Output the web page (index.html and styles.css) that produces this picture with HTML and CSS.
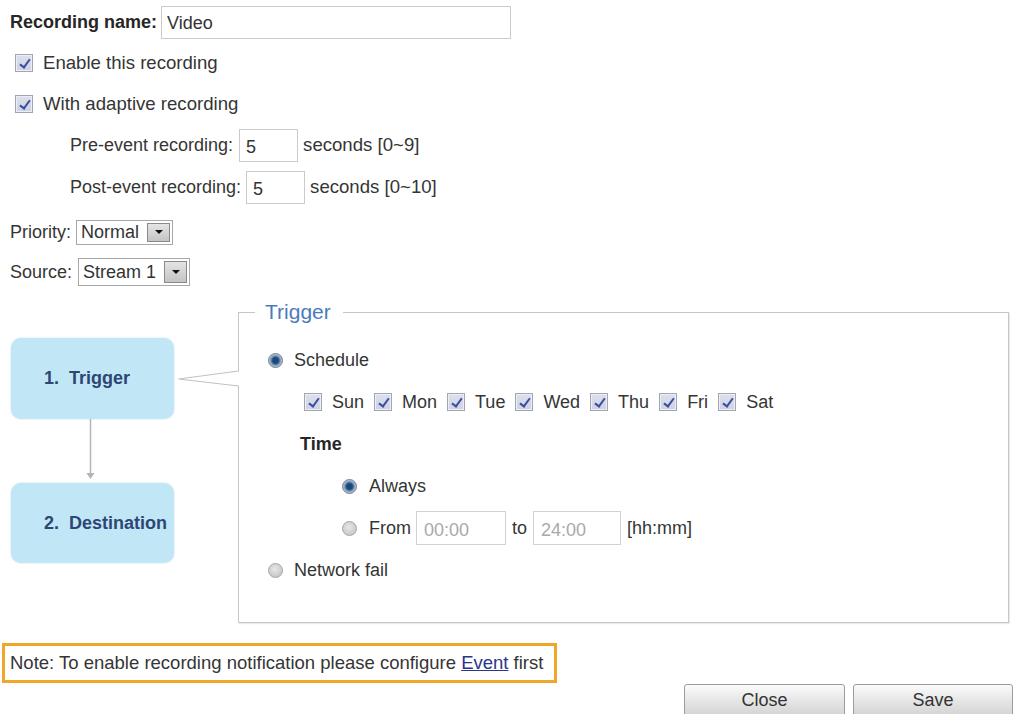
FILE: index.html
```html
<!DOCTYPE html>
<html>
<head>
<meta charset="utf-8">
<title>Recording</title>
<link rel="stylesheet" href="styles.css">
</head>
<body>
<div class="page">
  <div class="row name-row">
    <span class="strong name-label">Recording name:</span>
    <input class="field name-input" type="text" value="Video">
  </div>

  <div class="row check-row first">
    <span class="cb"></span><span>Enable this recording</span>
  </div>
  <div class="row check-row">
    <span class="cb"></span><span>With adaptive recording</span>
  </div>

  <div class="row sub-row">
    <span>Pre-event recording:</span>
    <input class="field num-input pre" type="text" value="5">
    <span class="unit">seconds [0~9]</span>
  </div>
  <div class="row sub-row">
    <span>Post-event recording:</span>
    <input class="field num-input post" type="text" value="5">
    <span class="unit">seconds [0~10]</span>
  </div>

  <div class="row select-row priority">
    <span>Priority:</span>
    <div class="select sel-priority"><span class="val">Normal</span><span class="sel-btn"></span></div>
  </div>
  <div class="row select-row source">
    <span>Source:</span>
    <div class="select sel-source"><span class="val">Stream 1</span><span class="sel-btn"></span></div>
  </div>

  <div class="wizard">
    <div class="steps">
      <div class="step step-1">1.&nbsp; Trigger</div>
      <svg class="down-arrow" width="163" height="64" viewBox="0 0 163 64">
        <line x1="79.5" y1="0" x2="79.5" y2="58" stroke="#b4b4b4" stroke-width="1.5"/>
        <path d="M75.5 54 L83.5 54 L79.5 60 Z" fill="#b4b4b4"/>
      </svg>
      <div class="step step-2">2.&nbsp; Destination</div>
      <svg class="pointer" width="62" height="18" viewBox="0 0 62 18">
        <rect x="59" y="1.5" width="3" height="14" fill="#fff"/>
        <polyline points="60.5,1 0.5,9 60.5,16" fill="none" stroke="#c2c2c2" stroke-width="1.2"/>
      </svg>
    </div>

    <fieldset class="panel">
      <legend>Trigger</legend>
      <div class="panel-body">
        <div class="f-row">
          <span class="radio on"></span><span>Schedule</span>
        </div>
        <div class="f-row days">
          <span class="day"><span class="cb"></span>Sun</span>
          <span class="day"><span class="cb"></span>Mon</span>
          <span class="day"><span class="cb"></span>Tue</span>
          <span class="day"><span class="cb"></span>Wed</span>
          <span class="day"><span class="cb"></span>Thu</span>
          <span class="day"><span class="cb"></span>Fri</span>
          <span class="day"><span class="cb"></span>Sat</span>
        </div>
        <div class="f-row time-title"><span class="strong">Time</span></div>
        <div class="f-row time-opt">
          <span class="radio on"></span><span>Always</span>
        </div>
        <div class="f-row time-opt">
          <span class="radio"></span><span>From</span>
          <input class="field time-input from" type="text" value="00:00" disabled>
          <span class="to">to</span>
          <input class="field time-input until" type="text" value="24:00" disabled>
          <span class="fmt">[hh:mm]</span>
        </div>
        <div class="f-row">
          <span class="radio"></span><span>Network fail</span>
        </div>
      </div>
    </fieldset>
  </div>

  <div class="note">Note: To enable recording notification please configure&nbsp;<a href="#" class="event-link">Event</a>&nbsp;first</div>

  <div class="actions">
    <button class="btn btn-close" type="button">Close</button>
    <button class="btn btn-save" type="button">Save</button>
  </div>
</div>
</body>
</html>
```

FILE: styles.css
```css
* { box-sizing: border-box; }

html, body {
  margin: 0;
  overflow: hidden;
  background: #fff;
}

body {
  font-family: "Liberation Sans", Arial, sans-serif;
  font-size: 18px;
  color: #353535;
}

.page {
  width: 1018px;
  height: 714px;
  padding: 6px 0 0 10px;
}

.row {
  display: flex;
  align-items: center;
  white-space: nowrap;
}

.strong {
  font-weight: bold;
  color: #262626;
}

.field {
  font-family: "Liberation Sans", Arial, sans-serif;
  font-size: 18px;
  color: #333;
  background: #fff;
  border: 1px solid #cbcbcb;
  outline: none;
  margin: 0;
}

/* Recording name */
.name-row { height: 33px; }
.name-label { margin-right: 4px; }
.name-input {
  width: 350px;
  height: 33px;
  padding: 2px 5px 0;
}

/* Checkboxes */
.cb {
  position: relative;
  flex: none;
  display: inline-block;
  width: 18px;
  height: 18px;
  border: 1px solid #a3a6b2;
  background: linear-gradient(#dde0ec, #cdd2e4);
  box-shadow: inset 0 0 0 1px #eceef5;
}
.cb::after {
  content: "";
  position: absolute;
  left: 6px;
  top: 2px;
  width: 4px;
  height: 9px;
  border: solid #3c4d9e;
  border-width: 0 2px 2px 0;
  transform: rotate(36deg);
}

.check-row { height: 41px; font-size: 18.6px; }
.check-row.first { margin-top: 3px; }
.check-row .cb { margin: 0 10px 0 5px; }

/* Pre / post event */
.sub-row {
  height: 42px;
  padding-left: 60px;
}
.unit { font-size: 18.6px; }
.num-input {
  width: 59px;
  height: 33px;
  padding: 4px 6px 0;
  margin-right: 5px;
}
.num-input.pre { margin-left: 6px; }
.num-input.post { margin-left: 5px; }

/* Selects */
.select-row { height: 40px; }
.select-row.priority { margin-top: 4px; }

.select {
  display: flex;
  align-items: center;
  border: 1px solid #a8a8a8;
  background: #fff;
  padding: 0 2px 0 4px;
}
.select .val { flex: 1; color: #333; }
.sel-priority { width: 97px; height: 25px; margin-left: 5px; }
.sel-source { width: 112px; height: 28px; margin-left: 6px; }

.sel-btn {
  flex: none;
  display: flex;
  align-items: center;
  justify-content: center;
  width: 23px;
  height: calc(100% - 4px);
  border: 1px solid #8a8a8a;
  background: linear-gradient(#e4e4e4, #c4c4c4);
}
.sel-btn::after {
  content: "";
  border-left: 4px solid transparent;
  border-right: 4px solid transparent;
  border-top: 4px solid #111;
}

/* Wizard */
.wizard {
  display: flex;
  margin-top: 9px;
}

.steps {
  position: relative;
  flex: none;
  width: 228px;
  padding-top: 37px;
}

.step {
  width: 163px;
  margin-left: 1px;
  display: flex;
  align-items: center;
  padding-left: 33px;
  background: #c1e7f7;
  border-radius: 10px;
  font-weight: bold;
  color: #2d4674;
  box-shadow: 0 0 2px rgba(150, 200, 225, 0.6);
}
.step-1 { height: 81px; }
.step-2 { height: 80px; }

.down-arrow {
  display: block;
  margin-left: 1px;
}

.pointer {
  position: absolute;
  left: 168px;
  top: 69px;
}

.panel {
  width: 771px;
  margin: 0;
  padding: 0 0 31px 0;
  min-width: 0;
  border: 1px solid #c6c6c6;
  box-shadow: 1px 1px 1px rgba(0, 0, 0, 0.08);
}

.panel legend {
  margin-left: 16px;
  padding: 0 12px 0 10px;
  font-size: 21px;
  line-height: 22px;
  color: #4b7bbd;
}

.panel-body {
  padding: 16px 0 0 29px;
}

.f-row {
  height: 42px;
  display: flex;
  align-items: center;
  white-space: nowrap;
}

.radio {
  flex: none;
  display: inline-block;
  width: 15px;
  height: 15px;
  margin-right: 11px;
  border-radius: 50%;
  border: 1px solid #a5a5a5;
  background: radial-gradient(circle at 45% 40%, #e8e8e8, #bdbdbd);
}
.radio.on {
  border-color: #70808f;
  background: radial-gradient(circle, #1b4877 0, #1b4877 2.8px, #4d78a5 4px, #9db1c6 5.5px, #c6d0da 7.5px);
}

.days { margin-left: 36px; }
.day {
  display: flex;
  align-items: center;
  margin-right: 10px;
}
.day .cb { margin-right: 10px; }

.time-title { margin-left: 32px; }
.time-opt { margin-left: 74px; }
.time-opt .radio { margin-right: 12px; }

.time-input {
  height: 34px;
  padding: 4px 7px 0;
  color: #a9a9a9;
  border-color: #d2d2d2;
}
.time-input.from { width: 90px; margin-left: 5px; }
.time-input.until { width: 88px; }
.to { margin: 0 6px; }
.fmt { margin-left: 6px; }

/* Note */
.note {
  display: flex;
  align-items: center;
  width: 555px;
  height: 40px;
  margin: 20px 0 0 -8px;
  padding-left: 5px;
  border: 3px solid #f0a729;
  white-space: nowrap;
  font-size: 18.5px;
}
.event-link {
  color: #2a358c;
  text-decoration: underline;
}

/* Buttons */
.actions {
  display: flex;
  justify-content: flex-end;
  gap: 8px;
  margin-top: 1px;
  padding-right: 5px;
}

.btn {
  height: 33px;
  font-family: "Liberation Sans", Arial, sans-serif;
  font-size: 18px;
  color: #333;
  border: 1px solid #9c9c9c;
  border-radius: 3px;
  background: linear-gradient(#fbfbfb, #e6e6e6 50%, #d3d3d3);
  padding: 0;
}
.btn-close { width: 161px; }
.btn-save { width: 160px; }
```
